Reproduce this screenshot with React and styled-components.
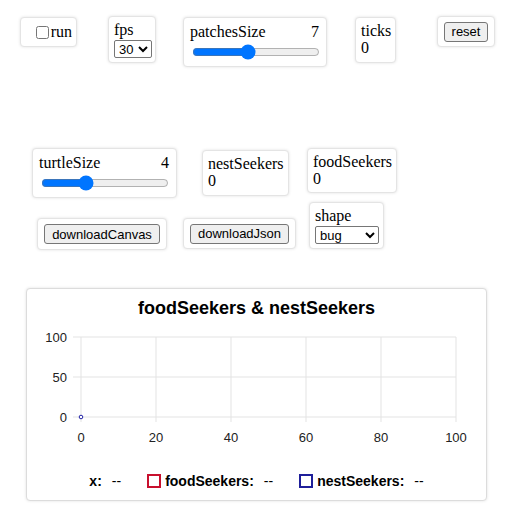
import React from 'react';
import styled, { createGlobalStyle } from 'styled-components';

const GlobalStyle = createGlobalStyle`
  html, body { margin: 0; padding: 0; background: #fff; }
  body { font-family: "Liberation Serif", "Times New Roman", serif; font-size: 16px; color: #000; }
`;

// widgets live on a free canvas, each at its own x/y like a NetLogo interface
const Canvas = styled.div`
  position: relative;
  width: 512px;
  height: 512px;
`;

const Widget = styled.div`
  position: absolute;
  left: ${p => p.$x}px;
  top: ${p => p.$y}px;
  width: ${p => p.$w}px;
  height: ${p => p.$h}px;
  box-sizing: border-box;
  border: 1px solid #e4e4e4;
  border-radius: 4px;
  box-shadow: 0 0 3px rgba(0, 0, 0, 0.12);
  background: #fff;
`;

const CheckWidget = styled(Widget)`
  display: flex;
  align-items: center;
  justify-content: flex-end;
  padding-right: 4px;
  label { display: flex; align-items: center; line-height: 18px; }
  input { margin: 0 2px 0 0; width: 13px; height: 13px; }
`;

const Stack = styled(Widget)`
  display: flex;
  flex-direction: column;
  padding: 4px 5px;
  line-height: 17px;
`;

const SliderWidget = styled(Widget)`
  display: flex;
  flex-direction: column;
  padding: 5px 7px 0 6px;
  line-height: 17px;
`;

const SliderHead = styled.div`
  display: flex;
  justify-content: space-between;
`;

const Range = styled.input`
  width: 128px;
  margin: 4px 0 0 2px;
  height: 16px;
  accent-color: #0075ff;
`;

const Select = styled.select`
  font-family: "Liberation Sans", Arial, sans-serif;
  font-size: 13px;
  height: 18px;
  width: ${p => p.$w}px;
  margin: 2px 0 0 0;
  padding: 0;
  border: 1px solid #767676;
  border-radius: 2px;
  background: #fff;
`;

const ButtonWidget = styled(Widget)`
  display: flex;
  align-items: center;
  justify-content: center;
`;

const Button = styled.button`
  font-family: "Liberation Sans", Arial, sans-serif;
  font-size: 13px;
  line-height: 15px;
  height: 20px;
  padding: 1px 7px;
  color: #000;
  background: #efefef;
  border: 1px solid #767676;
  border-radius: 3px;
`;

const PlotWidget = styled(Widget)`
  display: flex;
  flex-direction: column;
  align-items: center;
  font-family: "Liberation Sans", Arial, sans-serif;
  border-color: #dcdcdc;
`;

const PlotTitle = styled.div`
  font-size: 18px;
  font-weight: bold;
  line-height: 20px;
  margin-top: 9px;
`;

const Chart = styled.svg`
  display: block;
  margin-top: 5px;
`;

const Legend = styled.div`
  display: flex;
  gap: 26px;
  margin-top: 25px;
  font-size: 14px;
  line-height: 18px;
`;

const LegendItem = styled.div`
  display: flex;
  align-items: center;
  gap: 10px;
  b { font-weight: bold; }
`;

const Swatch = styled.span`
  display: inline-block;
  width: 10px;
  height: 10px;
  border: 2px solid ${p => p.$color};
  margin-right: -6px;
`;

const xs = [0, 20, 40, 60, 80, 100];
const ys = [100, 50, 0];
const px = v => 53 + v * 3.75;
const py = v => 94 - v * 0.8;

const PlotChart = () => (
  <Chart width="458" height="124">
    {xs.map(v => (
      <g key={'x' + v}>
        <line x1={px(v)} x2={px(v)} y1={14} y2={99} stroke="#e3e3e3" />
        <text x={px(v)} y={119} textAnchor="middle" fontSize="13" fill="#222" fontFamily="Liberation Sans, Arial, sans-serif">{v}</text>
      </g>
    ))}
    {ys.map(v => (
      <g key={'y' + v}>
        <line x1={45} x2={428} y1={py(v)} y2={py(v)} stroke="#e3e3e3" />
        <text x={39} y={py(v) + 4.5} textAnchor="end" fontSize="13" fill="#222" fontFamily="Liberation Sans, Arial, sans-serif">{v}</text>
      </g>
    ))}
    <circle cx={px(0)} cy={py(0)} r="1.8" fill="#fff" stroke="#2323a8" strokeWidth="1" />
  </Chart>
);

export default function App() {
  return (
    <>
      <GlobalStyle />
      <Canvas>
        <CheckWidget $x={20} $y={17} $w={57} $h={30}>
          <label><input type="checkbox" />run</label>
        </CheckWidget>

        <Stack $x={108} $y={16} $w={48} $h={47}>
          <span>fps</span>
          <Select $w={38} defaultValue="30">
            <option>30</option>
            <option>60</option>
          </Select>
        </Stack>

        <SliderWidget $x={183} $y={17} $w={144} $h={50}>
          <SliderHead><span>patchesSize</span><span>7</span></SliderHead>
          <Range type="range" min="1" max="15" defaultValue="7" />
        </SliderWidget>

        <Stack $x={355} $y={17} $w={41} $h={46}>
          <span>ticks</span>
          <span>0</span>
        </Stack>

        <ButtonWidget $x={437} $y={16} $w={58} $h={31}>
          <Button>reset</Button>
        </ButtonWidget>

        <SliderWidget $x={32} $y={148} $w={145} $h={50}>
          <SliderHead><span>turtleSize</span><span>4</span></SliderHead>
          <Range type="range" min="1" max="10" defaultValue="4" />
        </SliderWidget>

        <Stack $x={202} $y={150} $w={87} $h={46}>
          <span>nestSeekers</span>
          <span>0</span>
        </Stack>

        <Stack $x={307} $y={148} $w={90} $h={45}>
          <span>foodSeekers</span>
          <span>0</span>
        </Stack>

        <ButtonWidget $x={37} $y={218} $w={130} $h={32}>
          <Button>downloadCanvas</Button>
        </ButtonWidget>

        <ButtonWidget $x={183} $y={218} $w={113} $h={31}>
          <Button>downloadJson</Button>
        </ButtonWidget>

        <Stack $x={309} $y={202} $w={75} $h={47}>
          <span>shape</span>
          <Select $w={64} defaultValue="bug">
            <option>bug</option>
            <option>default</option>
          </Select>
        </Stack>

        <PlotWidget $x={26} $y={288} $w={461} $h={213}>
          <PlotTitle>foodSeekers &amp; nestSeekers</PlotTitle>
          <PlotChart />
          <Legend>
            <LegendItem><b>x:</b><span>--</span></LegendItem>
            <LegendItem><Swatch $color="#c8102e" /><b>foodSeekers:</b><span>--</span></LegendItem>
            <LegendItem><Swatch $color="#1f1f9a" /><b>nestSeekers:</b><span>--</span></LegendItem>
          </Legend>
        </PlotWidget>
      </Canvas>
    </>
  );
}
